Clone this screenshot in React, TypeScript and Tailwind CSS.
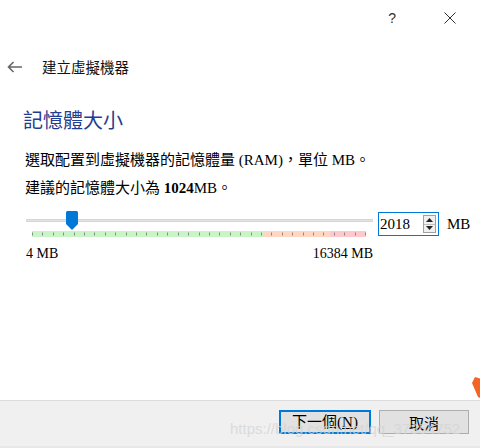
import React from "react";

const CJK = { fontFamily: '"Noto Sans CJK TC", "Noto Sans CJK SC", sans-serif' };
const MIX = { fontFamily: '"Liberation Serif", "Noto Sans CJK TC", serif' };

function TickBar() {
  const w = 334;
  const ticks = [];
  for (let i = 0; i <= 32; i++) {
    const x = Math.round(i * (w - 1) / 32) + 0.5;
    ticks.push(<line key={i} x1={x} y1={1.5} x2={x} y2={4.5} stroke="#8a8a8a" strokeWidth={1} />);
  }
  return (
    <svg width={w} height={6} className="block">
      <rect x={0} y={0} width={231} height={6} fill="#c9f5c6" />
      <rect x={231} y={0} width={67} height={6} fill="#ffd6c2" />
      <rect x={298} y={0} width={36} height={6} fill="#ffc8cc" />
      {ticks}
    </svg>
  );
}

export default function App() {
  return (
    <div className="w-[480px] h-[448px] bg-white flex flex-col relative overflow-hidden" style={CJK}>
      {/* title bar */}
      <div className="h-[36px] flex items-center justify-end text-[#333]">
        <span className="text-[14px] mr-[48px]" style={{ fontFamily: '"Liberation Sans", sans-serif' }}>?</span>
        <svg width="12" height="12" viewBox="0 0 12 12" className="mr-[24px]">
          <path d="M0.5 0.5 L11.5 11.5 M11.5 0.5 L0.5 11.5" stroke="#333" strokeWidth="1" />
        </svg>
      </div>
      {/* header */}
      <div className="mt-[16px] h-[30px] flex items-center">
        <svg width="16" height="12" viewBox="0 0 16 12" className="ml-[7px]">
          <path d="M15 6 H1.5 M6.5 1 L1.5 6 L6.5 11" stroke="#666" strokeWidth="1.6" fill="none" />
        </svg>
        <span className="ml-[19px] text-[14.5px] text-[#111]">建立虛擬機器</span>
      </div>
      {/* heading */}
      <div className="mt-[26px] ml-[23px] h-[24px] leading-[24px] text-[20px] text-[#1f3d91]">記憶體大小</div>
      <div className="mt-[18px] ml-[25px] h-[20px] leading-[20px] text-[15px] text-black" style={MIX}>
        選取配置到虛擬機器的記憶體量 (RAM)，單位 MB。
      </div>
      <div className="mt-[8px] ml-[25px] h-[20px] leading-[20px] text-[15px] text-black" style={MIX}>
        建議的記憶體大小為 <b>1024</b>MB。
      </div>
      {/* slider row */}
      <div className="mt-[14px] flex items-start">
        <div className="ml-[26px] w-[347px] flex flex-col">
          <div className="relative h-[19px]">
            <div className="absolute left-0 right-0 top-[7px] h-[3px] bg-[#e3e3e3] border-y border-[#d6d6d6]" />
            <svg width="14" height="20" viewBox="0 0 14 20" className="absolute left-[39px] top-[-1px]">
              <path d="M1 1.5 Q1 0 2.5 0 H11.5 Q13 0 13 1.5 V13 L7 19 L1 13 Z" fill="#0078d7" />
            </svg>
          </div>
          <div className="ml-[6px]">
            <TickBar />
          </div>
          <div className="mt-[9px] flex justify-between text-[14px] leading-[16px] text-black" style={MIX}>
            <span>4 MB</span>
            <span>16384 MB</span>
          </div>
        </div>
        <div className="ml-[5px] w-[61px] h-[24px] border border-[#0078d7] flex items-center" style={MIX}>
          <span className="ml-[1px] text-[15px] text-black leading-none flex-1">2018</span>
          <div className="w-[13px] h-[18px] mr-[2px] border border-[#a0a0a0] bg-[#f0f0f0] flex flex-col">
            <div className="flex-1 flex items-center justify-center border-b border-[#c0c0c0]">
              <svg width="7" height="4" viewBox="0 0 7 4"><path d="M0 4 L3.5 0 L7 4 Z" fill="#222" /></svg>
            </div>
            <div className="flex-1 flex items-center justify-center">
              <svg width="7" height="4" viewBox="0 0 7 4"><path d="M0 0 L3.5 4 L7 0 Z" fill="#222" /></svg>
            </div>
          </div>
        </div>
        <span className="ml-[8px] mt-[4px] text-[15px] leading-[16px] text-black" style={MIX}>MB</span>
      </div>
      <div className="flex-1" />
      {/* footer */}
      <div className="h-[48px] bg-[#f0f0f0] border-t border-[#dcdcdc] flex items-start justify-end relative">
        <button className="mt-[9px] w-[92px] h-[24px] border-2 border-[#0078d7] bg-[#e1e1e1] text-[15px] text-black leading-none" style={MIX}>
          下一個(<span className="underline">N</span>)
        </button>
        <button className="mt-[9px] ml-[8px] mr-[11px] w-[90px] h-[24px] border border-[#adadad] bg-[#e1e1e1] text-[15px] text-black leading-none">
          取消
        </button>
        <div className="absolute bottom-0 left-0 right-0 h-[2px] bg-[#e8e8e8]" />
        <span className="absolute left-[230px] top-[19px] text-[15px] leading-[18px] text-[#d4d4d4] opacity-75 pointer-events-none whitespace-nowrap" style={{ fontFamily: '"Liberation Sans", sans-serif' }}>
          https://blog.csdn.net/qq_37354752
        </span>
      </div>
      <svg width="10" height="22" viewBox="0 0 10 22" className="absolute left-[472px] top-[377px]">
        <path d="M3 0 L10 2 L10 22 L6 20 L0 6 Z" fill="#f26522" />
      </svg>
    </div>
  );
}
